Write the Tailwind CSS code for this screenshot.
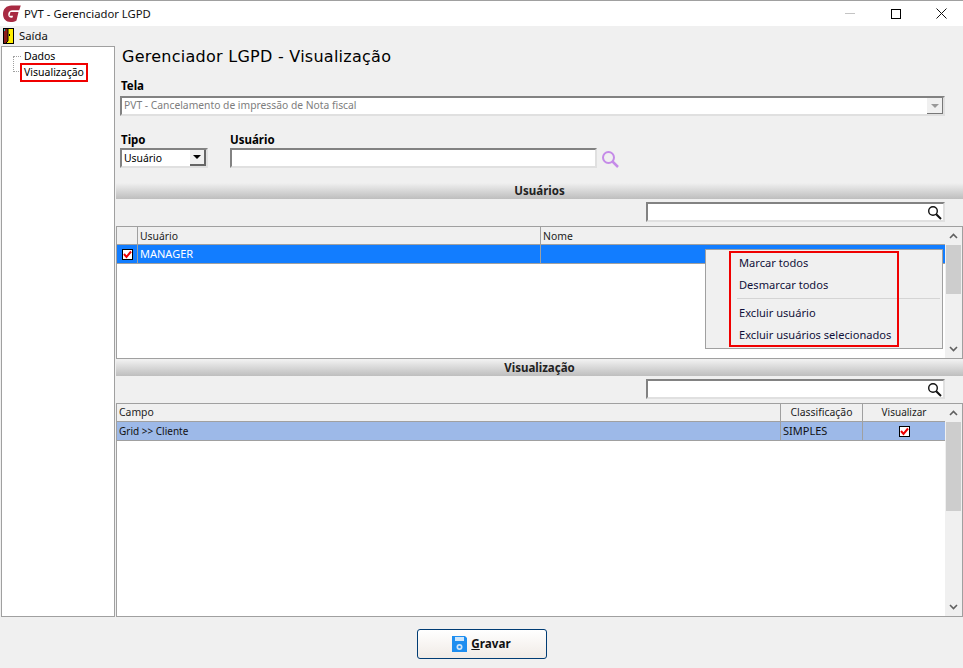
<!DOCTYPE html>
<html lang="pt-BR">
<head>
  <meta charset="UTF-8" />
  <title>PVT - Gerenciador LGPD</title>
  <script src="https://cdn.jsdelivr.net/npm/@tailwindcss/browser@4"></script>
</head>
<body class="bg-[#f0f0f0] font-['Noto_Sans','Liberation_Sans',sans-serif] text-[10.4px] text-black overflow-hidden">
  <div class="w-[963px] h-[668px] flex flex-col">

    <!-- title bar -->
    <div class="h-[26px] bg-white border-t border-[#a0a0a0] flex items-center shrink-0">
      <svg class="ml-[3px] w-[18px] h-[17px]" viewBox="0 0 18 17">
        <path d="M17.8 0.5 L8.5 0.5 C3.5 0.5 0 4 0 9 C0 13.8 3 17 7.5 17 C10 17 12 16.5 13.5 15.5 L15.5 7 L7.5 7 L6.5 10.8 L10 10.8 L9.6 12.4 C7.5 13.2 5.2 12.2 5.2 9.5 C5.2 6.8 7 5.2 9.5 5.2 L16.2 5.2 Z" fill="#a82a42"/>
      </svg>
      <span class="ml-[3px] text-[11.3px] leading-none text-[#111]">PVT - Gerenciador LGPD</span>
      <div class="ml-auto flex items-center">
        <div class="w-[10px] h-px bg-[#c4c4c4] mr-[36px]"></div>
        <div class="w-[10px] h-[10px] border border-black mr-[35px]"></div>
        <svg class="w-[11px] h-[11px] mr-[16px]" viewBox="0 0 11 11"><path d="M0.5 0.5 L10.5 10.5 M10.5 0.5 L0.5 10.5" stroke="#111" stroke-width="1"/></svg>
      </div>
    </div>

    <!-- menu -->
    <div class="h-[20px] flex items-center shrink-0">
      <svg class="ml-[3px] w-[11px] h-[16px]" viewBox="0 0 11 16">
        <rect width="11" height="16" fill="#000"/>
        <rect x="1" y="1" width="9" height="14" fill="#ffee00"/>
        <path d="M1 1 H5 V13 L3 15 H1 Z" fill="#8a1c1c"/>
        <rect x="1" y="1" width="1" height="2" fill="#20c0c0"/>
        <path d="M5 1 V13 L3 15" fill="none" stroke="#000" stroke-width="1"/>
        <rect x="6" y="6" width="1" height="2" fill="#000"/>
      </svg>
      <span class="ml-[5px] text-[11.3px] text-[#111]">Saída</span>
    </div>

    <!-- body -->
    <div class="h-[571px] flex shrink-0">
      <!-- tree -->
      <div class="relative ml-px mr-px w-[114px] bg-white border border-[#a0a0a0] shrink-0">
        <div class="pl-[22px] pt-px flex flex-col">
          <span class="h-[16px] leading-[16px] text-[10.5px]">Dados</span>
          <span class="h-[16px] leading-[16px] text-[10.5px]">Visualização</span>
        </div>
        <div class="absolute left-[11px] top-[9px] h-[16px] w-[8px] border-l border-b border-dotted border-[#a0a0a0]"></div>
        <div class="absolute left-[11px] top-[9px] w-[8px] border-t border-dotted border-[#a0a0a0]"></div>
        <div class="absolute left-[18px] top-[16px] w-[68px] h-[19px] border-2 border-[#f00000]"></div>
      </div>

      <!-- main -->
      <div class="relative flex-1 flex flex-col min-w-0">
        <div class="pl-[6px] h-[22px] text-[16px] leading-[22px] tracking-[0.26px] text-black font-['DejaVu_Sans',sans-serif]">Gerenciador LGPD - Visualização</div>

        <div class="pl-[5px] mt-[11px] h-[15px] leading-[14px] font-bold text-[11.5px]">Tela</div>
        <div class="ml-[4px] mt-[2px] w-[825px] h-[20px] bg-white border-2 border-[#828282] border-r-[#e0e0e0] border-b-[#e0e0e0] flex items-center">
          <span class="pl-[2px] text-[10.3px] text-[#7d7d7d]">PVT - Cancelamento de impressão de Nota fiscal</span>
          <div class="ml-auto w-[16px] h-[16px] bg-[#f0f0f0] border-r border-b border-[#777] flex items-center justify-center">
            <div class="w-0 h-0 border-l-[4px] border-r-[4px] border-t-[4px] border-l-transparent border-r-transparent border-t-[#999]"></div>
          </div>
        </div>

        <div class="flex mt-[16px] h-[36px]">
          <div class="ml-[4px] w-[88px]">
            <div class="pl-px h-[16px] leading-[15px] font-bold text-[11.5px]">Tipo</div>
            <div class="h-[20px] bg-white border-2 border-[#828282] border-r-[#e0e0e0] border-b-[#e0e0e0] flex items-center">
              <span class="pl-[2px] pt-px text-[10.4px]">Usuário</span>
              <div class="ml-auto w-[16px] h-[16px] bg-[#f0f0f0] border-r-2 border-b-2 border-[#666] flex items-center justify-center">
                <div class="w-0 h-0 border-l-[4px] border-r-[4px] border-t-[4px] border-l-transparent border-r-transparent border-t-black"></div>
              </div>
            </div>
          </div>
          <div class="ml-[22px] w-[367px]">
            <div class="h-[16px] leading-[15px] font-bold text-[11.5px]">Usuário</div>
            <div class="h-[20px] bg-white border-2 border-[#828282] border-r-[#e0e0e0] border-b-[#e0e0e0]"></div>
          </div>
          <svg class="ml-[4px] mt-[18px] w-[19px] h-[19px]" viewBox="0 0 19 19" fill="none">
            <circle cx="7.5" cy="7.5" r="5.5" stroke="#c58be8" stroke-width="2"/>
            <path d="M11.5 11.5 L17 17" stroke="#c58be8" stroke-width="2.5"/>
          </svg>
        </div>

        <!-- usuarios -->
        <div class="mt-[15px] h-[16px] bg-gradient-to-b from-[#f0f0f0] to-[#bebebe] text-center font-bold text-[11.5px] leading-[16px] text-[#222] shrink-0">Usuários</div>
        <div class="mt-[3px] ml-[530px] w-[299px] h-[20px] bg-white border-2 border-[#828282] border-r-[#e0e0e0] border-b-[#e0e0e0] flex items-center justify-end shrink-0">
          <svg class="w-[15px] h-[15px] mr-[1px]" viewBox="0 0 15 15" fill="none"><circle cx="6" cy="6" r="4.3" stroke="#111" stroke-width="1.4"/><path d="M9.2 9.2 L14 14" stroke="#111" stroke-width="2"/></svg>
        </div>
        <div class="relative mt-[4px] h-[133px] bg-white border border-[#a0a0a0] flex shrink-0">
          <div class="flex-1 min-w-0">
            <div class="h-[18px] bg-[#f0f0f0] border-b border-[#a0a0a0] flex leading-[18px] text-[#222]">
              <div class="w-[21px] border-r border-[#a0a0a0]"></div>
              <div class="w-[403px] border-r border-[#a0a0a0] pl-[2px]">Usuário</div>
              <div class="flex-1 pl-[2px]">Nome</div>
            </div>
            <div class="h-[19px] bg-[#127dff] border-b border-[#a0a0a0] flex text-[11px] leading-[18px] text-white">
              <div class="w-[21px] border-r border-[#a0a0a0] flex items-center justify-center">
                <div class="w-[11px] h-[11px] bg-white border border-black flex items-center justify-center">
                  <svg class="w-[9px] h-[9px]" viewBox="0 0 9 9" fill="none"><path d="M1 4 L3.5 7 L8 1.5" stroke="#f00000" stroke-width="2"/></svg>
                </div>
              </div>
              <div class="w-[403px] border-r border-[#a0a0a0] pl-[2px]">MANAGER</div>
              <div class="flex-1"></div>
            </div>
          </div>
          <div class="w-[17px] bg-[#f0f0f0] flex flex-col items-center shrink-0">
            <svg class="mt-[6px] w-[9px] h-[6px]" viewBox="0 0 9 6" fill="none"><path d="M1 5 L4.5 1.5 L8 5" stroke="#606060" stroke-width="1.6"/></svg>
            <div class="mt-[6px] w-[15px] h-[49px] bg-[#cdcdcd]"></div>
            <svg class="mt-auto mb-[6px] w-[9px] h-[6px]" viewBox="0 0 9 6" fill="none"><path d="M1 1 L4.5 4.5 L8 1" stroke="#606060" stroke-width="1.6"/></svg>
          </div>
        </div>

        <!-- visualizacao -->
        <div class="mt-px h-[16px] bg-gradient-to-b from-[#f0f0f0] to-[#bebebe] text-center font-bold text-[11.5px] leading-[16px] text-[#222] shrink-0">Visualização</div>
        <div class="mt-[3px] ml-[530px] w-[299px] h-[20px] bg-white border-2 border-[#828282] border-r-[#e0e0e0] border-b-[#e0e0e0] flex items-center justify-end shrink-0">
          <svg class="w-[15px] h-[15px] mr-[1px]" viewBox="0 0 15 15" fill="none"><circle cx="6" cy="6" r="4.3" stroke="#111" stroke-width="1.4"/><path d="M9.2 9.2 L14 14" stroke="#111" stroke-width="2"/></svg>
        </div>
        <div class="mt-[4px] flex-1 min-h-0 bg-white border border-[#a0a0a0] flex">
          <div class="flex-1 min-w-0">
            <div class="h-[18px] bg-[#f0f0f0] border-b border-[#a0a0a0] flex leading-[17px] text-[#222]">
              <div class="w-[664px] border-r border-[#a0a0a0] pl-[2px]">Campo</div>
              <div class="w-[82px] border-r border-[#a0a0a0] text-center">Classificação</div>
              <div class="flex-1 text-center text-[10px]">Visualizar</div>
            </div>
            <div class="h-[19px] bg-[#9db9e8] border-b border-[#a0a0a0] flex leading-[18px] text-[#111]">
              <div class="w-[664px] border-r border-[#a0a0a0] pl-[2px] text-[10px]">Grid &gt;&gt; Cliente</div>
              <div class="w-[82px] border-r border-[#a0a0a0] pl-[2px] text-[11px]">SIMPLES</div>
              <div class="flex-1 flex items-center justify-center">
                <div class="w-[11px] h-[11px] bg-white border border-black flex items-center justify-center">
                  <svg class="w-[9px] h-[9px]" viewBox="0 0 9 9" fill="none"><path d="M1 4 L3.5 7 L8 1.5" stroke="#f00000" stroke-width="2"/></svg>
                </div>
              </div>
            </div>
          </div>
          <div class="w-[17px] bg-[#f0f0f0] flex flex-col items-center shrink-0">
            <svg class="mt-[6px] w-[9px] h-[6px]" viewBox="0 0 9 6" fill="none"><path d="M1 5 L4.5 1.5 L8 5" stroke="#606060" stroke-width="1.6"/></svg>
            <div class="mt-[6px] w-[15px] h-[89px] bg-[#cdcdcd]"></div>
            <svg class="mt-auto mb-[6px] w-[9px] h-[6px]" viewBox="0 0 9 6" fill="none"><path d="M1 1 L4.5 4.5 L8 1" stroke="#606060" stroke-width="1.6"/></svg>
          </div>
        </div>

        <!-- popup menu -->
        <div class="absolute left-[589px] top-[203px] w-[238px] h-[100px] bg-[#f0f0f0] border border-[#a0a0a0] pl-[33px] text-[11.1px] text-[#10103a]">
          <div class="h-[22px] mt-[2px] leading-[22px]">Marcar todos</div>
          <div class="h-[22px] leading-[22px]">Desmarcar todos</div>
          <div class="h-px bg-[#d4d4d4] -ml-[2px] mr-[2px] mt-[2px] mb-[3px]"></div>
          <div class="h-[22px] leading-[22px]">Excluir usuário</div>
          <div class="h-[22px] leading-[22px]">Excluir usuários selecionados</div>
          <div class="absolute left-[23px] top-[1px] w-[170px] h-[96px] border-2 border-[#f00000]"></div>
        </div>
      </div>
    </div>

    <!-- footer -->
    <div class="flex-1 flex items-center justify-center">
      <button class="mt-[3px] w-[130px] h-[30px] rounded-[3px] border border-[#003c74] bg-gradient-to-b from-white to-[#f0ebe6] flex items-center justify-center">
        <svg class="w-[15px] h-[16px]" viewBox="0 0 15 16">
          <path d="M0 0 H13 L15 2 V16 H0 Z" fill="#1e8ef0"/>
          <rect x="3" y="1" width="9" height="4" fill="#cfe6fa"/>
          <circle cx="7.5" cy="11" r="3" fill="#cfe6fa"/>
          <circle cx="7.5" cy="11" r="1.3" fill="#1e8ef0"/>
        </svg>
        <span class="ml-[4px] font-bold text-[11.7px] text-[#111]"><span class="underline">G</span>ravar</span>
      </button>
    </div>
  </div>
</body>
</html>
